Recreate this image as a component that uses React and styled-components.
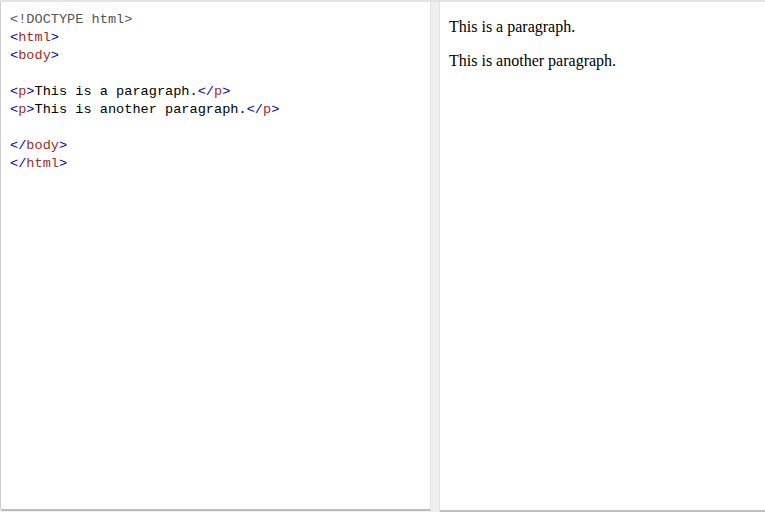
import React from 'react'
import styled, { createGlobalStyle } from 'styled-components'

const GlobalStyle = createGlobalStyle`
    html, body {
        margin: 0;
        padding: 0;
        background: #ffffff;
    }
`

const lines = [
    [{ k: 'meta', t: '<!DOCTYPE html>' }],
    [{ k: 'br', t: '<' }, { k: 'tag', t: 'html' }, { k: 'br', t: '>' }],
    [{ k: 'br', t: '<' }, { k: 'tag', t: 'body' }, { k: 'br', t: '>' }],
    [],
    [{ k: 'br', t: '<' }, { k: 'tag', t: 'p' }, { k: 'br', t: '>' }, { k: 'txt', t: 'This is a paragraph.' }, { k: 'br', t: '</' }, { k: 'tag', t: 'p' }, { k: 'br', t: '>' }],
    [{ k: 'br', t: '<' }, { k: 'tag', t: 'p' }, { k: 'br', t: '>' }, { k: 'txt', t: 'This is another paragraph.' }, { k: 'br', t: '</' }, { k: 'tag', t: 'p' }, { k: 'br', t: '>' }],
    [],
    [{ k: 'br', t: '</' }, { k: 'tag', t: 'body' }, { k: 'br', t: '>' }],
    [{ k: 'br', t: '</' }, { k: 'tag', t: 'html' }, { k: 'br', t: '>' }],
]

const App = () => {
  return (
    <>
        <GlobalStyle />
        <Page>
            <EditorPane>
                <Code>
                    {lines.map((line, i) => (
                        <Line key={i}>
                            {line.map((tok, j) => <Token key={j} $kind={tok.k}>{tok.t}</Token>)}
                        </Line>
                    ))}
                </Code>
            </EditorPane>
            <Gutter />
            <ResultPane>
                <Para>This is a paragraph.</Para>
                <Para>This is another paragraph.</Para>
            </ResultPane>
        </Page>
    </>
  )
}

const Page = styled.div`
    display: flex;
    height: 512px;
    width: 765px;
    box-sizing: border-box;
    padding-top: 2px;
    background: linear-gradient(to bottom, #e4e4e4 0, #e4e4e4 2px, #f1f1f1 2px);
    overflow: hidden;
`

const EditorPane = styled.div`
    width: 429px;
    height: 507px;
    margin-left: 1px;
    background: #ffffff;
    box-shadow: 0 2px 0 #bdbdbd, -1px 0 0 #cfcfcf;
`

const Code = styled.div`
    padding: 9px 0 0 9px;
    font-family: "Liberation Mono", "DejaVu Sans Mono", monospace;
    font-size: 13.6px;
    line-height: 18px;
    white-space: pre;
`

const Line = styled.div`
    height: 18px;
`

// colours follow the editor's syntax theme
const tokenColors = {
    meta: '#555555',
    br: '#0000cd',
    tag: '#a52a2a',
    txt: '#000000',
}

const Token = styled.span`
    color: ${p => tokenColors[p.$kind]};
`

const Gutter = styled.div`
    width: 10px;
    height: 510px;
    background: #efefef;
    border-left: 1px solid #e2e2e2;
    border-right: 1px solid #e2e2e2;
    box-sizing: border-box;
`

const ResultPane = styled.div`
    flex: 1;
    height: 508px;
    background: #ffffff;
    box-shadow: 0 2px 0 #bdbdbd;
    padding: 16px 8px 0 9px;
    box-sizing: border-box;
`

const Para = styled.p`
    margin: 0 0 16px;
    font-family: "Liberation Serif", "Times New Roman", serif;
    font-size: 16px;
    line-height: 18px;
    color: #000000;
`

export default App
